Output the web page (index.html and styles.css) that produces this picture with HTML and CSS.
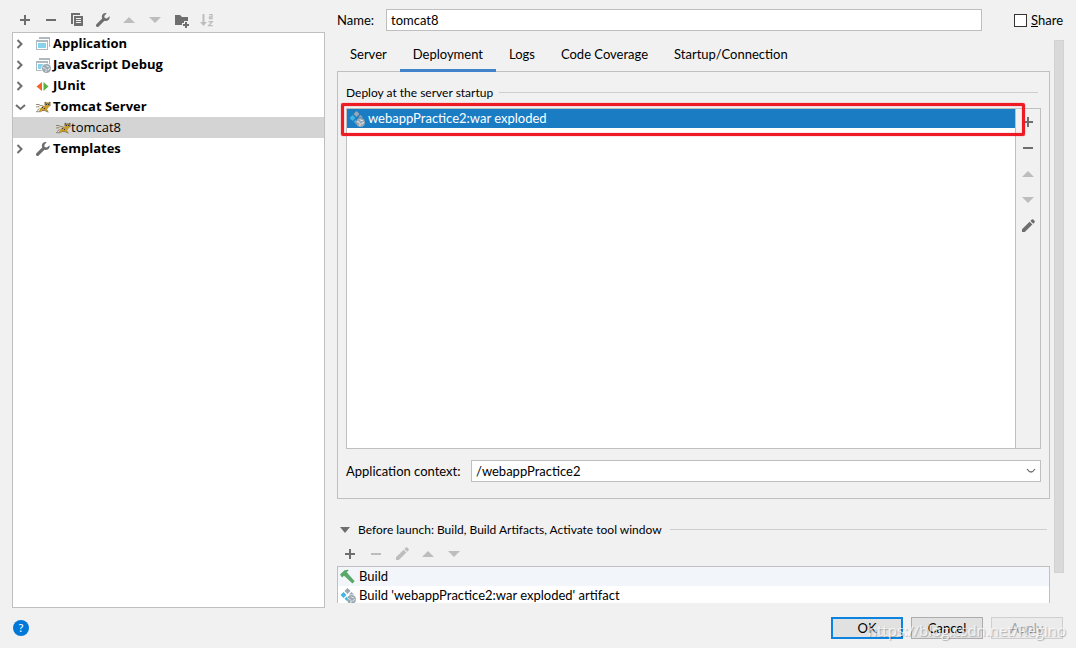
FILE: index.html
```html
<!DOCTYPE html>
<html lang="en">
<head>
<meta charset="utf-8">
<title>Run/Debug Configurations</title>
<link rel="stylesheet" href="styles.css">
</head>
<body>
<svg class="defs" aria-hidden="true">
  <symbol id="i-plus" viewBox="0 0 16 16"><path fill="currentColor" d="M7 3h2v4h4v2H9v4H7V9H3V7h4z"/></symbol>
  <symbol id="i-minus" viewBox="0 0 16 16"><path fill="currentColor" d="M3 7h10v2H3z"/></symbol>
  <symbol id="i-up" viewBox="0 0 16 16"><path fill="currentColor" d="M2 11l6-6 6 6z"/></symbol>
  <symbol id="i-down" viewBox="0 0 16 16"><path fill="currentColor" d="M2 5h12l-6 6z"/></symbol>
  <symbol id="i-copy" viewBox="0 0 16 16"><path fill="currentColor" d="M2 1h9v2H4v9H2zM5 4h9v10H5zm2 2v1h5V6zm0 2v1h5V8zm0 2v1h5v-1z" fill-rule="evenodd"/></symbol>
  <symbol id="i-wrench" viewBox="0 0 16 16"><path fill="currentColor" d="M14.600 4.300 11.800 6.500 9.700 5.900 9.300 3.900 11.600 1.200C9.300.7 7.300 2 6.900 4.100 6.700 5 6.900 5.800 7.200 6.600L1.400 12.200a1.500 1.500 0 0 0 2.300 2.300L9.400 8.700c1.100.5 2.600.4 3.700-.4 1.300-.9 1.800-2.500 1.500-4z"/></symbol>
  <symbol id="i-folder" viewBox="0 0 16 16"><path fill="currentColor" d="M2 3h5l2 2h6v4h-4v2H9v2H2zM12 10h2v2h2v2h-2v2h-2v-2h-2v-2h2z"/></symbol>
  <symbol id="i-sort" viewBox="0 0 16 16"><path fill="currentColor" d="M3.500 2h2v8H8l-3.500 4L1 10h2.500z"/><path fill="none" stroke="currentColor" stroke-width="1.300" d="M10 2.700h3v4h-2.500V4.800H13M9.500 9.600h3.700l-3.500 4h4"/></symbol>
  <symbol id="i-pencil" viewBox="0 0 16 16"><path fill="currentColor" d="M2 11.200 9.600 3.700l2.800 2.800L4.800 14H2zM10.400 2.900l1.300-1.300q.8-.8 1.600 0l1.200 1.200q.8.800 0 1.600l-1.300 1.300z"/></symbol>
  <symbol id="i-right" viewBox="0 0 16 16"><path fill="none" stroke="#6e6e6e" stroke-width="2" d="M4.500 4l4 4-4 4"/></symbol>
  <symbol id="i-open" viewBox="0 0 16 16"><path fill="none" stroke="#6e6e6e" stroke-width="2" d="M3 6l4.500 4L12 6"/></symbol>
  <symbol id="i-app" viewBox="0 0 16 16"><path fill="#aeb9c0" d="M4 1h11v10h-1V3H4z"/><path fill="#aeb9c0" fill-rule="evenodd" d="M1 4h12v10H1zm1 2v7h10V6z"/><path fill="#86d3ec" d="M3 7h8v5H3z"/></symbol>
  <symbol id="i-globe" viewBox="0 0 16 16"><circle cx="11.500" cy="11.500" r="4.500" fill="#9aa7b0"/><path fill="none" stroke="#e8edf0" stroke-width="1" d="M8 10.500l2 .7 1.200 1.500-.4 2.300M11 8.300l.8 1.200 2 .2M15 11.500l-1.700.5-.3 1.500"/></symbol>
  <symbol id="i-js" viewBox="0 0 16 16"><use href="#i-app"/><circle cx="11.500" cy="11.500" r="5.200" fill="#fff"/><use href="#i-globe"/></symbol>
  <symbol id="i-junit" viewBox="0 0 16 16"><path fill="#f26522" d="M7 4v9L1.500 8.500z"/><path fill="#59b143" d="M8.500 4v9L13.500 8.500z"/></symbol>
  <symbol id="i-cat" viewBox="0 0 16 16"><path fill="#c99a2c" d="M4 12l1.500-3L8 7l2-.5V3l1.500 1h2L15 3v4l-2 2-1 1.500 1.500 1.500-1 1-2-1.500H8L6 13z"/><path fill="none" stroke="#77704f" stroke-width=".8" d="M1 5.500h3l2 1.500M1 8l3.500-.3M1 12.700h4.500M7 11.500l3 .2 3.500 1.500M4.500 9.500l-2.500 2M6 6.500l2.500.5"/><path fill="none" stroke="#504628" stroke-width=".8" d="M10 6V3l1.500 1h2L15 3v4"/><path fill="#333" d="M11 5h1v1h-1zM13 5h1v1h-1zM7 8h1v1H7zM9 9h1v1H9z"/></symbol>
  <symbol id="i-war" viewBox="0 0 16 16"><path fill="#9aa7b0" d="M7.500 0l3 3-3 3-3-3z"/><path fill="#40b6e0" d="M3.500 4l3 3-3 3-3-3z"/><path fill="#9aa7b0" d="M11.500 4l2.500 2.500h-5z"/><path fill="#40b6e0" d="M7 8.500v4.500l-2.500-2.200z"/><use href="#i-globe"/></symbol>
  <symbol id="i-hammer" viewBox="0 0 16 16"><path fill="#59a869" d="M0 5.500 4.500 1.200l3.500-.4.700.7-2 1.500 1.300 1.700 6.700 7.600-2.200 2.200-7.300-6.800-1.200-1L2 8.500z"/></symbol>
</svg>

<main class="main">
  <section class="side">
    <div class="toolbar">
      <button class="tool" aria-label="Add"><svg><use href="#i-plus"/></svg></button>
      <button class="tool" aria-label="Remove"><svg><use href="#i-minus"/></svg></button>
      <button class="tool" aria-label="Copy"><svg><use href="#i-copy"/></svg></button>
      <button class="tool" aria-label="Edit templates"><svg><use href="#i-wrench"/></svg></button>
      <button class="tool" aria-label="Move up" disabled><svg><use href="#i-up"/></svg></button>
      <button class="tool" aria-label="Move down" disabled><svg><use href="#i-down"/></svg></button>
      <button class="tool" aria-label="New folder"><svg><use href="#i-folder"/></svg></button>
      <button class="tool" aria-label="Sort" disabled><svg><use href="#i-sort"/></svg></button>
    </div>
    <ul class="tree" role="tree">
      <li class="node" role="treeitem"><svg class="arrow"><use href="#i-right"/></svg><svg><use href="#i-app"/></svg>Application</li>
      <li class="node" role="treeitem"><svg class="arrow"><use href="#i-right"/></svg><svg><use href="#i-js"/></svg>JavaScript Debug</li>
      <li class="node" role="treeitem"><svg class="arrow"><use href="#i-right"/></svg><svg><use href="#i-junit"/></svg>JUnit</li>
      <li class="node" role="treeitem"><svg class="arrow"><use href="#i-open"/></svg><svg><use href="#i-cat"/></svg>Tomcat Server</li>
      <li class="node child" role="treeitem" aria-selected="true"><svg><use href="#i-cat"/></svg>tomcat8</li>
      <li class="node" role="treeitem"><svg class="arrow"><use href="#i-right"/></svg><svg class="gray"><use href="#i-wrench"/></svg>Templates</li>
    </ul>
  </section>

  <section class="editor">
    <div class="name-row">
      <label class="name-label" for="name">Name:</label>
      <input class="field" id="name" type="text" value="tomcat8">
      <label class="share"><input type="checkbox"><span><u>S</u>hare</span></label>
    </div>
    <div class="scroller">
      <div class="content">
        <div class="tabs" role="tablist">
          <button class="tab" role="tab">Server</button>
          <button class="tab active" role="tab" aria-selected="true">Deployment</button>
          <button class="tab" role="tab">Logs</button>
          <button class="tab" role="tab">Code Coverage</button>
          <button class="tab" role="tab">Startup/Connection</button>
        </div>
        <div class="panel">
          <h2 class="group">Deploy at the server startup</h2>
          <div class="deploy">
            <ul class="artifacts">
              <li class="item selected"><svg><use href="#i-war"/></svg>webappPractice2:war exploded</li>
            </ul>
            <div class="actions">
              <button class="tool" aria-label="Add"><svg><use href="#i-plus"/></svg></button>
              <button class="tool" aria-label="Remove"><svg><use href="#i-minus"/></svg></button>
              <button class="tool" aria-label="Move up" disabled><svg><use href="#i-up"/></svg></button>
              <button class="tool" aria-label="Move down" disabled><svg><use href="#i-down"/></svg></button>
              <button class="tool" aria-label="Edit"><svg><use href="#i-pencil"/></svg></button>
            </div>
            <div class="marker"></div>
          </div>
          <div class="context-row">
            <label class="context-label" for="context">Application context:</label>
            <div class="combo">
              <select class="field" id="context"><option>/webappPractice2</option></select>
              <svg class="combo-arrow" viewBox="0 0 10 6"><path d="M1 1q2 3 4 3t4-3" fill="none" stroke="#6e6e6e" stroke-width="1.300"/></svg>
            </div>
          </div>
        </div>
        <h2 class="group before"><svg viewBox="0 0 10 6"><path d="M0 0h10L5 6z" fill="#6e6e6e"/></svg>Before launch: Build, Build Artifacts, Activate tool window</h2>
        <div class="toolbar tasks-bar">
          <button class="tool" aria-label="Add"><svg><use href="#i-plus"/></svg></button>
          <button class="tool" aria-label="Remove" disabled><svg><use href="#i-minus"/></svg></button>
          <button class="tool" aria-label="Edit" disabled><svg><use href="#i-pencil"/></svg></button>
          <button class="tool" aria-label="Move up" disabled><svg><use href="#i-up"/></svg></button>
          <button class="tool" aria-label="Move down" disabled><svg><use href="#i-down"/></svg></button>
        </div>
        <ul class="tasks">
          <li class="item striped"><svg><use href="#i-hammer"/></svg>Build</li>
          <li class="item"><svg><use href="#i-war"/></svg>Build 'webappPractice2:war exploded' artifact</li>
        </ul>
      </div>
      <div class="thumb"></div>
    </div>
  </section>
</main>

<footer class="footer">
  <button class="help" aria-label="Help">?</button>
  <button class="btn primary">OK</button>
  <button class="btn">Cancel</button>
  <button class="btn" disabled>Apply</button>
  <span class="watermark">https://blog.csdn.net/Regino</span>
</footer>
</body>
</html>
```
FILE: styles.css
```css
* { box-sizing: border-box; }

body {
  margin: 0;
  height: 100vh;
  display: flex;
  flex-direction: column;
  background: #f1f1f1;
  color: #000;
  font: 13px/19px Lato, "Open Sans", sans-serif;
}

button, input, select { font: inherit; color: inherit; }
button { padding: 0; border: 0; background: none; }
ul { margin: 0; padding: 0; list-style: none; }
svg { width: 16px; height: 16px; flex: none; }
.defs { position: absolute; width: 0; height: 0; }

.main {
  flex: 1;
  min-height: 0;
  display: flex;
  gap: 12px;
  padding: 0 12px;
}

/* Configuration tree */
.side { width: 313px; flex: none; display: flex; flex-direction: column; }
.toolbar { display: flex; gap: 10px; padding: 12px 5px 4px; }
.tool { display: flex; width: 16px; height: 16px; color: #6e6e6e; }
.tool:disabled { color: #bdbdbd; }
.tree { flex: 1; background: #fff; border: 1px solid #bfbfbf; }
.node {
  display: flex;
  align-items: center;
  gap: 2px;
  height: 21px;
  font-family: "Open Sans", sans-serif;
  font-weight: 700;
}
.node .arrow { margin-right: 4px; }
.child { padding-left: 42px; gap: 0; font-weight: 400; background: #d4d4d4; }
.gray { color: #6e6e6e; }

/* Editor */
.editor { flex: 1; min-width: 0; display: flex; flex-direction: column; }
.name-row { display: flex; align-items: center; padding-top: 9px; }
.name-label { width: 49px; }
.field {
  flex: 1;
  min-width: 0;
  width: 100%;
  height: 22px;
  padding: 0 4px;
  border: 1px solid #bfbfbf;
  border-radius: 0;
  background: #fff;
  outline: 0;
}
.share { display: flex; align-items: center; gap: 4px; width: 50px; margin-left: 32px; }
.share input {
  appearance: none;
  width: 13px;
  height: 13px;
  margin: 0;
  border: 1px solid #333;
  background: #fff;
}
.scroller {
  flex: 1;
  min-height: 0;
  display: flex;
  gap: 4px;
  margin: 9px 0 5px;
  overflow: hidden;
}
.content { flex: 1; min-width: 0; }
.thumb { width: 10px; height: 533px; background: #d9d9d9; border: 1px solid #d2d2d2; }

.tabs { display: flex; height: 32px; margin-bottom: -1px; }
.tab { padding: 0 13px; border-bottom: 3px solid transparent; }
.tab.active { border-color: #4083c9; }

.panel { padding: 11px 8px 16px; border: 1px solid #bfbfbf; }
.group { display: flex; align-items: center; gap: 6px; margin: 0; font-size: 12px; font-weight: 400; line-height: 19px; }
.group::after { content: ""; flex: 1; height: 1px; margin-right: 3px; background: #cecece; }

.deploy { position: relative; display: flex; margin-top: 6px; border: 1px solid #bfbfbf; min-height: 341px; }
.artifacts { flex: 1; background: #fff; border-right: 1px solid #bfbfbf; }
.item { display: flex; align-items: center; gap: 3px; height: 19px; padding-left: 2px; }
.selected { background: #1a7dc4; color: #fff; }
.actions { display: flex; flex-direction: column; align-items: center; gap: 10px; width: 24px; padding-top: 5px; }
.marker {
  position: absolute;
  inset: -6px 15px auto -6px;
  height: 33px;
  border: 3px solid #ed1c24;
  border-radius: 2px;
  box-shadow: 0 0 1px #ed1c24, inset 0 0 1px #ed1c24;
  pointer-events: none;
}

.context-row { display: flex; align-items: center; margin-top: 11px; }
.context-label { width: 125px; }
.combo { position: relative; flex: 1; display: flex; }
.combo .field { appearance: none; }
.combo-arrow { position: absolute; right: 5px; top: 8px; width: 10px; height: 6px; pointer-events: none; }

.before { margin-top: 21px; padding-left: 3px; gap: 8px; }
.before svg { width: 10px; height: 6px; }
.tasks-bar { padding: 7px 5px 4px; }
.tasks { background: #fff; border: 1px solid #bfbfbf; }
.striped { background: #f2f5fa; }

/* Dialog buttons */
.footer { position: relative; display: flex; align-items: center; gap: 8px; padding: 9px 13px; }
.help { width: 16px; height: 16px; margin-right: auto; border-radius: 50%; background: #0078d7; color: #fff; font-size: 12px; line-height: 16px; }
.btn { width: 72px; height: 22px; border: 1px solid #adadad; background: #e1e1e1; line-height: 18px; }
.btn.primary { border: 2px solid #0a84e0; }
.btn:disabled { border-color: #cfcfcf; background: #ebebeb; color: #a5a5a5; }
.watermark {
  position: absolute;
  right: 10px;
  bottom: 8px;
  color: rgba(255, 255, 255, .75);
  font: 15px/20px "Open Sans", sans-serif;
  text-shadow: 1px 1px 1px rgba(0, 0, 0, .25);
  pointer-events: none;
}
```
